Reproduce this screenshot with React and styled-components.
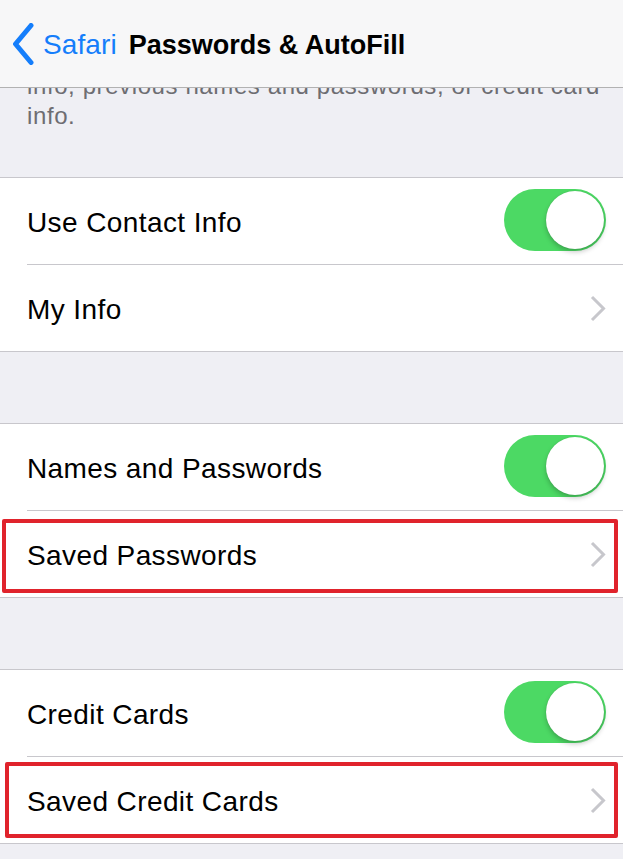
import React from "react";
import styled, { createGlobalStyle } from "styled-components";

const GlobalStyle = createGlobalStyle`
    body {
        margin: 0;
        background: #efeff4;
        font-family: "Liberation Sans", Arial, sans-serif;
        -webkit-font-smoothing: antialiased;
    }
`;

const Screen = styled.div`
    width: 623px;
    height: 859px;
    overflow: hidden;
    background: #efeff4;
`;

const NavBar = styled.div`
    height: 88px;
    box-sizing: border-box;
    display: flex;
    align-items: center;
    padding: 3px 0 0 12px;
    background: #f7f7f8;
    border-bottom: 1px solid #b2b2b2;
`;

const BackButton = styled.div`
    display: flex;
    align-items: center;
    gap: 9px;
    color: #157efb;
    font-size: 28px;
    letter-spacing: 0.1px;

    svg {
        margin-top: -3px;
    }
`;

const Title = styled.div`
    margin-left: 12px;
    font-size: 27px;
    font-weight: bold;
    color: #000;
`;

// the group footer scrolled under the nav bar, so its first line is cut
const FooterNote = styled.div`
    height: 89px;
    overflow: hidden;
`;

const NoteText = styled.p`
    margin: -17px 0 0;
    padding-left: 27px;
    font-size: 24px;
    letter-spacing: 0.6px;
    line-height: 30px;
    color: #6d6d72;
`;

const Group = styled.div`
    background: #fff;
    border-top: 1px solid #c8c7cc;
    border-bottom: 1px solid #c8c7cc;
    margin-bottom: ${({ $gap }) => $gap}px;
`;

const Row = styled.div`
    position: relative;
    padding-left: 27px;
`;

const RowInner = styled.div`
    height: 86px;
    display: flex;
    align-items: center;
    justify-content: space-between;
    border-bottom: ${({ $last }) => ($last ? "none" : "1px solid #c8c7cc")};
`;

const Label = styled.span`
    font-size: 28px;
    letter-spacing: 0.4px;
    color: #000;
    margin-top: 4px;
`;

const Toggle = styled.div`
    position: relative;
    width: 102px;
    height: 62px;
    margin-right: 17px;
    margin-top: -2px;
    border-radius: 31px;
    background: #4cd964;
`;

const Knob = styled.div`
    position: absolute;
    top: 2px;
    right: 2px;
    width: 58px;
    height: 58px;
    border-radius: 50%;
    background: #fff;
    box-shadow: 0 3px 5px rgba(0, 0, 0, 0.22), 0 0 1px rgba(0, 0, 0, 0.2);
`;

const Chevron = styled.svg`
    margin-right: 17px;
    flex-shrink: 0;
`;

const Highlight = styled.div`
    position: absolute;
    top: ${({ $t }) => $t}px;
    bottom: ${({ $b }) => $b}px;
    left: ${({ $l }) => $l}px;
    right: ${({ $r }) => $r}px;
    border: 4px solid #e0232c;
    border-radius: 2px;
    pointer-events: none;
`;

const Disclosure = () => (
    <Chevron width="16" height="27" viewBox="0 0 16 27">
        <polyline points="2,2 13.5,13.5 2,25" fill="none" stroke="#c7c7cc" strokeWidth="3" />
    </Chevron>
);

const Switch = () => (
    <Toggle>
        <Knob />
    </Toggle>
);

const SettingRow = ({ label, toggle, last, highlight }) => (
    <Row>
        <RowInner $last={last}>
            <Label>{label}</Label>
            {toggle ? <Switch /> : <Disclosure />}
        </RowInner>
        {highlight && <Highlight $t={highlight[0]} $r={highlight[1]} $b={highlight[2]} $l={highlight[3]} />}
    </Row>
);

const groups = [
    [
        { label: "Use Contact Info", toggle: true },
        { label: "My Info" },
    ],
    [
        { label: "Names and Passwords", toggle: true },
        { label: "Saved Passwords", highlight: [8, 5, 4, 2] },
    ],
    [
        { label: "Credit Cards", toggle: true },
        { label: "Saved Credit Cards", highlight: [5, 5, 5, 5] },
    ],
];

export default function App() {
    return (
        <Screen>
            <GlobalStyle />
            <NavBar>
                <BackButton>
                    <svg width="22" height="42" viewBox="0 0 22 42">
                        <polyline points="19,2.5 3.5,21 19,39.5" fill="none" stroke="#157efb" strokeWidth="5" strokeLinecap="round" strokeLinejoin="round" />
                    </svg>
                    Safari
                </BackButton>
                <Title>Passwords &amp; AutoFill</Title>
            </NavBar>
            <FooterNote>
                <NoteText>
                    info, previous names and passwords, or credit card
                    <br />
                    info.
                </NoteText>
            </FooterNote>
            {groups.map((rows, gi) => (
                <Group key={gi} $gap={71}>
                    {rows.map((r, ri) => (
                        <SettingRow key={r.label} {...r} last={ri === rows.length - 1} />
                    ))}
                </Group>
            ))}
        </Screen>
    );
}
